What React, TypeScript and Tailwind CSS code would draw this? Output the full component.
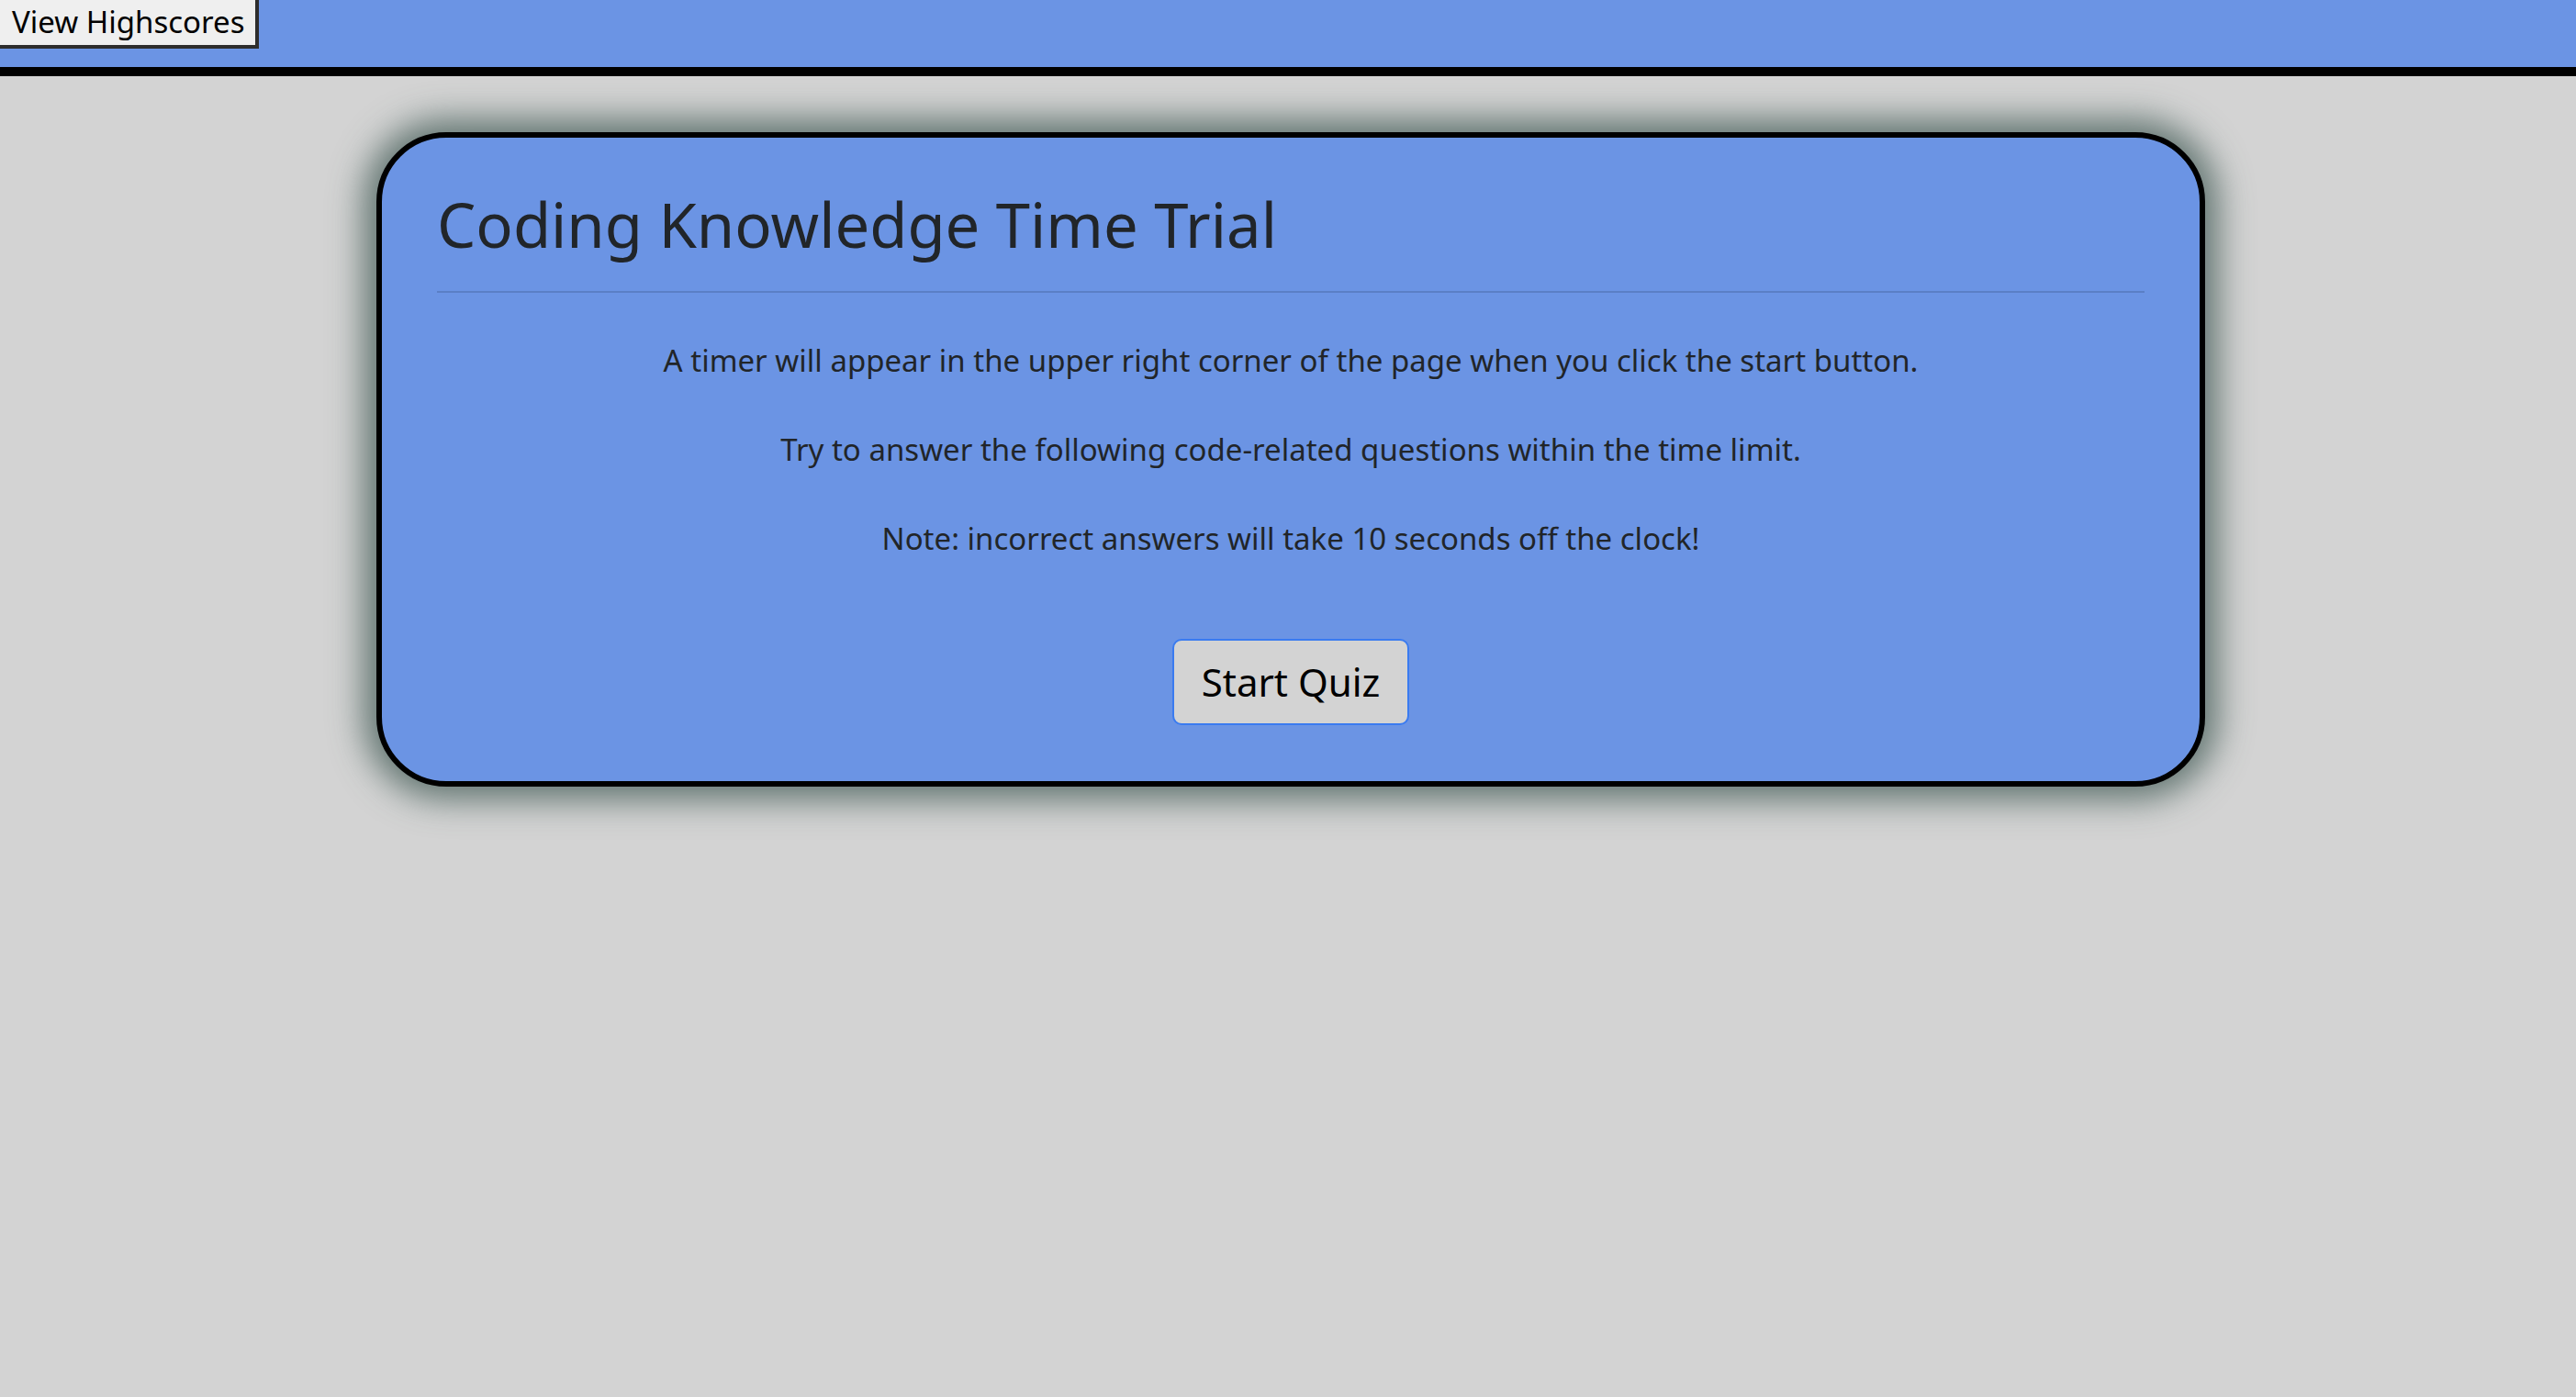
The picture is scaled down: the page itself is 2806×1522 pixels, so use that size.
export default function App() {
  return (
    <div className="min-h-screen bg-[#d3d3d3] font-['Noto_Sans',sans-serif] text-[#212529]">
      {/* Header */}
      <header className="h-[83px] bg-[#6b94e4] border-b-[10px] border-black">
        <button className="h-[53px] w-[282px] bg-[#efefef] border-r-4 border-b-4 border-[#2d2d2d] text-[33px] leading-none text-black pl-[13px] pb-[2px] text-left">
          View Highscores
        </button>
      </header>

      {/* Quiz card */}
      <main className="flex justify-center pt-[61px] pl-[6px]">
        <div className="w-[1992px] h-[713px] rounded-[76px] border-[6px] border-black bg-[#6b94e4] shadow-[0_0_36px_14px_rgba(60,85,80,0.75)] px-[60px] pt-[54px]">
          <h1 className="text-[67px] leading-[1.2] font-normal">Coding Knowledge Time Trial</h1>
          <hr className="mt-[33px] border-t-2 border-[#5a7fc6]" />
          <div className="mt-[50px] flex flex-col items-center text-center text-[33px] leading-[48px]">
            <p>A timer will appear in the upper right corner of the page when you click the start button.</p>
            <p className="mt-[49px]">Try to answer the following code-related questions within the time limit.</p>
            <p className="mt-[49px]">Note: incorrect answers will take 10 seconds off the clock!</p>
            <button className="mt-[85px] w-[258px] h-[94px] rounded-[10px] border-2 border-[#3a7bf0] bg-[#d3d3d3] text-[42px] leading-none text-black">
              Start Quiz
            </button>
          </div>
        </div>
      </main>
    </div>
  );
}
